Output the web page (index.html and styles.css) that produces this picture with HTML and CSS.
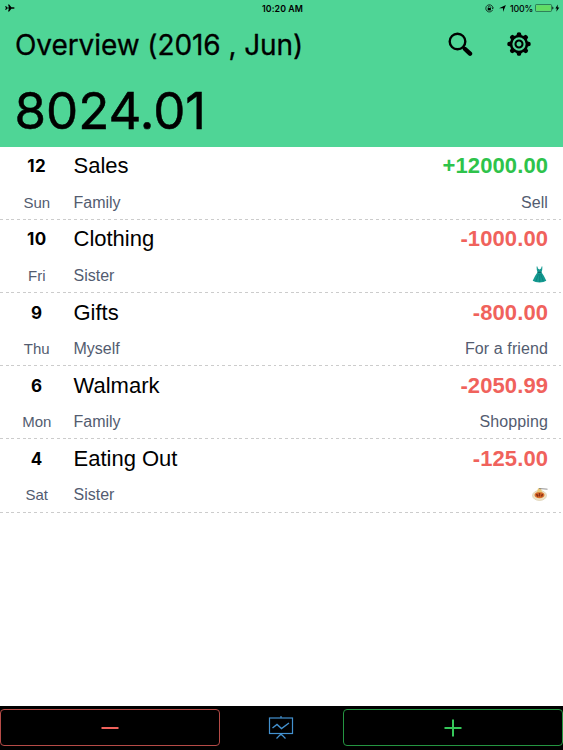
FILE: index.html
```html
<!DOCTYPE html>
<html lang="en">
<head>
  <meta charset="UTF-8" />
  <title>Overview</title>
  <link rel="stylesheet" href="styles.css">
</head>
<body>
  <header class="header">
    <div class="status">
      <svg class="plane" width="10" height="8" viewBox="0 0 10 8"><path d="M.3 2h.8l1 1.400H4L3 .4h1.200L6.400 3.200h2.200q1 .2 1 .8t-1 .8H6.400L4.200 7.600H3l1-3H2.100L1.100 6H.3L.8 4z"/></svg>
      <span class="clock">10:20 AM</span>
      <div class="status-right">
        <svg class="lock" width="9" height="9" viewBox="0 0 9 9"><path d="M7.7 5.8A3.6 3.6 0 1 1 7.8 3.2" fill="none" stroke="#000" stroke-width=".7"/><path d="M6.5 3.6h2.4L7.8 5.2z"/><rect x="2.7" y="4" width="3.2" height="2.4"/><path d="M3.3 4V3a1 1 0 0 1 2 0v1" fill="none" stroke="#000" stroke-width=".6"/></svg>
        <svg class="arrow" width="7" height="7" viewBox="0 0 7 7"><path d="M6.9.1L4 6.900V3.300H.1z"/></svg>
        <span class="percent">100%</span>
        <svg class="battery" width="25" height="8" viewBox="0 0 25 8"><rect x=".4" y=".4" width="16.200" height="7.200" rx="1.300" fill="none" stroke="#1d5136" stroke-width=".7"/><rect x="1.200" y="1.200" width="14.600" height="5.600" rx=".5" fill="#62dc63"/><path d="M17.400 2.600q1 .3 1 1.400t-1 1.400z"/><path d="M22.800.4L20.400 4.500h1.500L21.300 7.800l3-4.300h-1.700z"/></svg>
      </div>
    </div>
    <div class="title-bar">
      <h1 class="title">Overview (2016 , Jun)</h1>
      <svg class="search" width="25" height="25" viewBox="0 0 25 25"><circle cx="9.500" cy="9.500" r="7.800" fill="none" stroke="#000" stroke-width="2.400"/><path d="M15 15l2.500 2.300" stroke="#000" stroke-width="2.800"/><path d="M17 17l5 4.700" stroke="#000" stroke-width="4.400" stroke-linecap="round"/></svg>
      <svg class="gear" width="24" height="24" viewBox="-12 -12 24 24">
        <circle r="7.900" fill="none" stroke="#000" stroke-width="2.500"/>
        <circle r="3.500" fill="none" stroke="#000" stroke-width="2.100"/>
        <g id="teeth"><path d="M-2.800-8L-1.800-11.200Q0-12.200 1.800-11.200L2.800-8zM-2.800 8L-1.800 11.200Q0 12.200 1.800 11.200L2.800 8zM-8-2.800L-11.200-1.800Q-12.200 0-11.200 1.800L-8 2.800zM8-2.800L11.200-1.800Q12.200 0 11.200 1.800L8 2.800z"/></g>
        <use href="#teeth" transform="rotate(45)"/>
      </svg>
    </div>
    <div class="balance">8024.01</div>
  </header>

  <main class="list">
    <div class="row">
      <div class="date"><b class="day">12</b><span class="week">Sun</span></div>
      <div class="info"><span class="name">Sales</span><span class="member">Family</span></div>
      <div class="money"><b class="amount income">+12000.00</b><span class="note">Sell</span></div>
    </div>
    <div class="row">
      <div class="date"><b class="day">10</b><span class="week">Fri</span></div>
      <div class="info"><span class="name">Clothing</span><span class="member">Sister</span></div>
      <div class="money"><b class="amount">-1000.00</b><span class="note">
        <svg class="emoji" width="16" height="17" viewBox="0 0 16 17"><path d="M4.600.4h.8l.5 2.200 1.600.9 1.600-.9.5-2.200h.8l-.2 3.400-.7 2.400q3 4 4.800 8.500Q12 16.500 7.500 16.500T.7 14.700q1.800-4.500 4.800-8.500l-.7-2.400z" fill="#159a91"/><path d="M5.600 6.300h3.800" stroke="#0b5f62"/><path d="M6.500 8L4 15M7.700 8v8M8.700 8l2.500 7" stroke="#087b77" stroke-width=".7"/></svg>
      </span></div>
    </div>
    <div class="row">
      <div class="date"><b class="day">9</b><span class="week">Thu</span></div>
      <div class="info"><span class="name">Gifts</span><span class="member">Myself</span></div>
      <div class="money"><b class="amount">-800.00</b><span class="note">For a friend</span></div>
    </div>
    <div class="row">
      <div class="date"><b class="day">6</b><span class="week">Mon</span></div>
      <div class="info"><span class="name">Walmark</span><span class="member">Family</span></div>
      <div class="money"><b class="amount">-2050.99</b><span class="note">Shopping</span></div>
    </div>
    <div class="row">
      <div class="date"><b class="day">4</b><span class="week">Sat</span></div>
      <div class="info"><span class="name">Eating Out</span><span class="member">Sister</span></div>
      <div class="money"><b class="amount">-125.00</b><span class="note">
        <svg class="emoji" width="16" height="17" viewBox="0 0 16 17"><ellipse cx="7.500" cy="10.500" rx="7" ry="5" fill="#eee3c5" stroke="#d5c7a4" stroke-width=".6"/><ellipse cx="7.500" cy="10" rx="5" ry="3.200" fill="#d9702a"/><path d="M4.500 9l1.500 2.500M7.500 8v3.500M10.500 9L9.500 11.500" stroke="#8b2c14" stroke-width="1.500"/><path d="M5 7.300l1-4h3l1 4z" fill="#e8c87a"/><path d="M7 3.500l8.500.7" stroke="#777" stroke-width=".8"/></svg>
      </span></div>
    </div>
  </main>

  <footer class="toolbar">
    <button class="btn minus"><svg width="18" height="18" viewBox="0 0 18 18"><path d="M.5 9h17" stroke="#f0625c" stroke-width="2"/></svg></button>
    <svg class="chart" width="26" height="26" viewBox="0 0 26 26" fill="none" stroke="#4391cf" stroke-width="1.200"><rect x="1.500" y="3" width="23" height="15.500"/><path d="M13 1v2M13 18.500v2M13 19l-4.500 4.500M13 19l4.500 4.500" /><path d="M4.500 13l4.500-3.500 4.500 4 7.500-5.500" stroke-width="1.400"/></svg>
    <button class="btn plus"><svg width="18" height="18" viewBox="0 0 18 18"><path d="M.5 9h17M9 .5v17" stroke="#35c759" stroke-width="2"/></svg></button>
  </footer>
</body>
</html>
```

FILE: styles.css
```css
* {
  box-sizing: border-box;
}
body {
  margin: 0;
  height: 750px;
  display: flex;
  flex-direction: column;
  background: #fff;
  font-family: "Liberation Sans", Arial, sans-serif;
  overflow: hidden;
}
svg {
  display: block;
  flex: none;
}
.header {
  height: 146.6px;
  background: #4fd596;
  font-family: Inter, sans-serif;
  white-space: nowrap;
}
.status {
  height: 16px;
  display: grid;
  grid-template-columns: 1fr auto 1fr;
  align-items: center;
  padding: 0 3px 0 5px;
  font-size: 9px;
}
.clock {
  font-weight: 600;
  font-size: 8.8px;
  letter-spacing: 0.1px;
}
.status-right {
  display: flex;
  justify-content: flex-end;
  align-items: center;
}
.arrow {
  margin: 0 4px 0 5px;
}
.percent {
  font-size: 8.8px;
  font-weight: 500;
  letter-spacing: -0.2px;
}
.battery {
  margin-left: 2px;
}
.title-bar {
  height: 57px;
  display: flex;
  align-items: center;
  padding: 0 32px 0 15px;
}
.title {
  margin: 0;
  flex: 1;
  font-size: 28px;
  font-weight: 400;
  letter-spacing: -0.08px;
  -webkit-text-stroke: 0.3px #000;
}
.search,
.gear {
  margin-bottom: 1px;
}
.gear {
  margin-left: 34px;
}
.balance {
  padding-left: 14.5px;
  font-size: 51px;
  line-height: 75px;
  -webkit-text-stroke: 0.5px #000;
}
.list {
  flex: 1;
}
.row {
  height: 73.2px;
  display: flex;
  padding-top: 0.6px;
  background: repeating-linear-gradient(90deg, #ccc 0 2.85px, transparent 2.85px 5.7px) bottom / 100% 1px no-repeat;
}
.date,
.info,
.money {
  display: flex;
  flex-direction: column;
}
.date {
  width: 73.5px;
  text-align: center;
}
.money {
  flex: 1;
  text-align: right;
  padding-right: 15px;
}
.day,
.name,
.amount {
  height: 37.5px;
  line-height: 38px;
}
.day {
  font: 700 17px/38px Inter, sans-serif;
  letter-spacing: 0.4px;
}
.name {
  font-size: 22px;
}
.amount {
  font-size: 22px;
  letter-spacing: 0.1px;
  margin-right: -0.1px;
  color: #f0625c;
}
.income {
  color: #2ec34b;
}
.week,
.member,
.note {
  height: 34px;
  line-height: 35px;
  font-size: 16px;
  color: #535c70;
}
.note {
  letter-spacing: 0.1px;
}
.week {
  font-size: 15px;
}
.emoji {
  margin: 8px 0 0 auto;
}
.toolbar {
  height: 44.5px;
  display: flex;
  align-items: center;
  justify-content: space-between;
  background: #000;
}
.chart {
  margin-right: 1px;
}
.btn {
  width: 220px;
  height: 37px;
  padding: 0;
  display: flex;
  align-items: center;
  justify-content: center;
  background: none;
  border: 1px solid #b54b47;
  border-radius: 4px;
}
.plus {
  border-color: #249541;
}
```
